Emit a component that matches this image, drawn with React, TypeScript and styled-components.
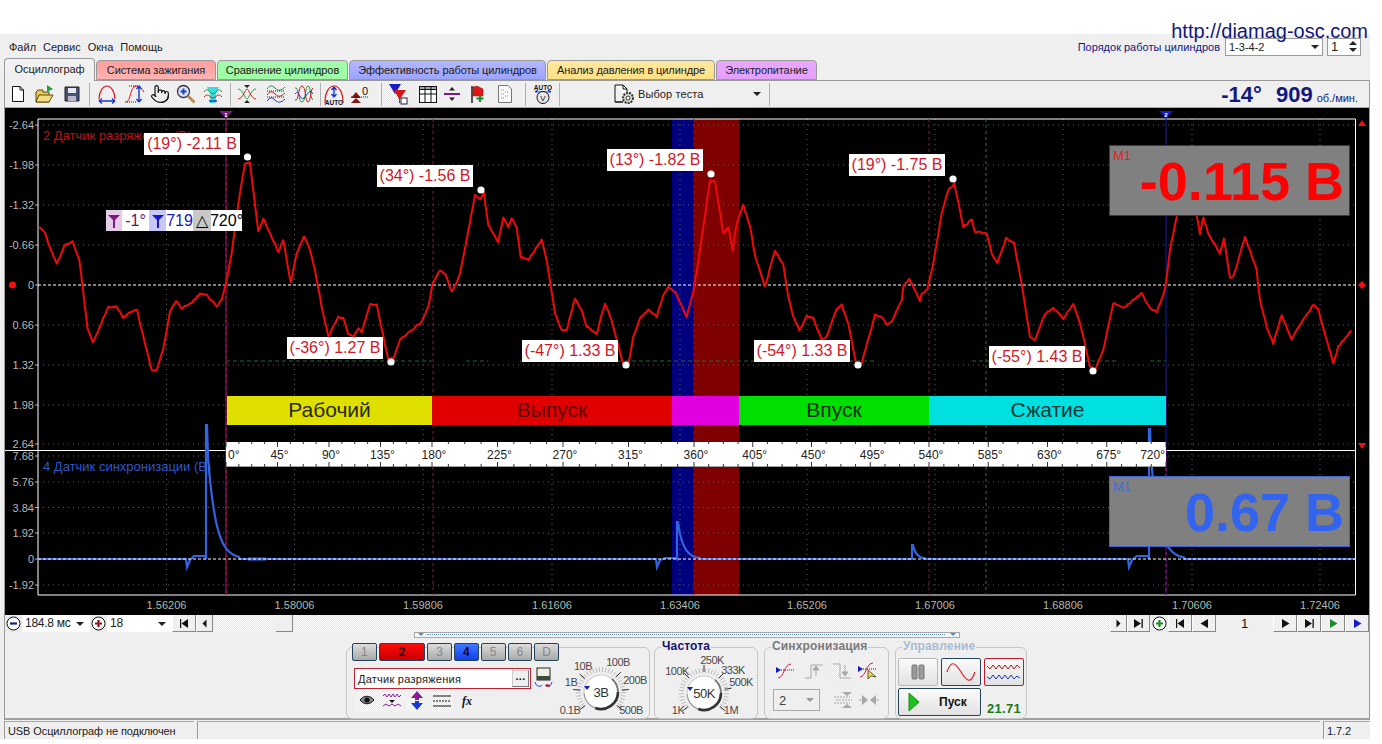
import React from "react";
import styled, { createGlobalStyle } from "styled-components";
import { Pointer } from "lucide-react";

const GlobalStyle = createGlobalStyle`
  html, body { margin: 0; padding: 0; background: #fff; }
  * { box-sizing: border-box; }
  body { font-family: "Liberation Sans", Arial, sans-serif; font-size: 11px; color: #111; overflow: hidden; }
`;

const Page = styled.div`
  position: relative;
  width: 1382px;
  height: 744px;
  padding-top: 34px;
`;
const SiteUrl = styled.div`
  position: absolute;
  top: 20px;
  right: 14px;
  font-size: 20px;
  color: #12187e;
  z-index: 3;
`;
const AppWindow = styled.div`
  width: 1370px;
  height: 705px;
  background: #efefef;
  display: flex;
  flex-direction: column;
`;
const MenuRow = styled.div`
  height: 26px;
  display: flex;
  justify-content: space-between;
  padding: 4px 9px 0 9px;
`;
const Menu = styled.div`
  display: flex;
  gap: 7px;
  padding-top: 3px;
  height: 17px;
  color: #222;
`;
const OrderBox = styled.div`
  display: flex;
  align-items: center;
  height: 17px;
  color: #12187e;
`;
const OrderSelect = styled.div`
  width: 98px;
  height: 18px;
  margin-left: 5px;
  background: #fff;
  border: 1px solid #9a9a9a;
  color: #222;
  padding: 0 3px;
  display: flex;
  justify-content: space-between;
  align-items: center;
`;
const Spinner = styled(OrderSelect)`
  width: 34px;
  margin-left: 4px;
  font-size: 13px;
`;
const SpinArrows = styled.div`
  display: flex;
  flex-direction: column;
  gap: 3px;
`;
const Tri = styled.span<{ $dir: "up" | "down"; $c?: string }>`
  display: block;
  flex: none;
  width: 0;
  height: 0;
  border-left: 4px solid transparent;
  border-right: 4px solid transparent;
  ${(p) => (p.$dir === "up" ? "border-bottom" : "border-top")}: 4px solid ${(p) => p.$c || "#222"};
`;
const TabsRow = styled.div`
  height: 20px;
  display: flex;
  gap: 1px;
  padding-left: 4px;
  align-items: flex-end;
`;
const Tab = styled.div<{ $w: number; $c1: string; $c2: string; $active?: boolean }>`
  position: relative;
  width: ${(p) => p.$w}px;
  height: ${(p) => (p.$active ? 23 : 20)}px;
  margin-bottom: ${(p) => (p.$active ? -1 : 0)}px;
  z-index: ${(p) => (p.$active ? 2 : 0)};
  border: 1px solid #9a9a9a;
  border-bottom: ${(p) => (p.$active ? "none" : "1px solid #9a9a9a")};
  border-radius: 4px 4px 0 0;
  background: linear-gradient(${(p) => p.$c1}, ${(p) => p.$c2});
  display: flex;
  align-items: center;
  justify-content: center;
  padding-bottom: ${(p) => (p.$active ? 3 : 0)}px;
  color: #1c1c1c;
  letter-spacing: -0.1px;
`;
const Workspace = styled.div`
  margin-left: 4px;
  width: 1366px;
  height: 640px;
  border: 1px solid #9a9a9a;
  border-bottom: none;
  display: flex;
  flex-direction: column;
`;
const Toolbar = styled.div`
  height: 27px;
  display: flex;
  align-items: center;
  border-bottom: 1px solid #a8a8a8;
`;
const ToolBtn = styled.div<{ $w: number; $ml?: number; $pressed?: boolean }>`
  width: ${(p) => p.$w}px;
  height: 25px;
  margin-left: ${(p) => p.$ml || 0}px;
  flex: none;
  display: flex;
  align-items: center;
  justify-content: center;
  background: ${(p) =>
    p.$pressed ? "repeating-conic-gradient(#e4e4e4 0 25%, #fbfbfb 0 50%) 0 0/2px 2px" : "transparent"};
`;
const ToolSep = styled.div<{ $ml?: number }>`
  width: 1px;
  height: 23px;
  flex: none;
  margin-left: ${(p) => p.$ml || 0}px;
  background: #b0b0b0;
`;
const TestPicker = styled.div`
  width: 155px;
  flex: none;
  margin-left: 54px;
  display: flex;
  align-items: center;
  gap: 3px;
  color: #222;
  letter-spacing: 0.1px;
`;
const TestArrow = styled.div`
  margin-left: auto;
  margin-right: 8px;
`;
const Rpm = styled.div`
  margin-left: auto;
  margin-right: 11px;
  padding-top: 1px;
  display: flex;
  align-items: baseline;
  color: #12187e;
  font-weight: 700;
  font-size: 22px;
`;
const RpmValue = styled.span`
  margin-left: 14px;
`;
const RpmUnit = styled.span`
  margin-left: 4px;
  font-weight: 400;
  font-size: 11px;
`;

const Scope = styled.div`
  position: relative;
  height: 507px;
  background: #000;
  overflow: hidden;
`;
const ScopeSvg = styled.svg`
  display: block;
  font-family: "Liberation Sans", Arial, sans-serif;
`;
const Callout = styled.div<{ $x: number; $y: number }>`
  position: absolute;
  left: ${(p) => p.$x - 5}px;
  top: ${(p) => p.$y - 108}px;
  width: 96px;
  height: 22px;
  background: #fff;
  color: #d01828;
  font-size: 16px;
  line-height: 22px;
  text-align: center;
  white-space: nowrap;
`;
const Readout = styled.div`
  position: absolute;
  left: 101px;
  top: 102px;
  height: 21px;
  display: flex;
  font-size: 16px;
  line-height: 21px;
`;
const ReadCell = styled.div<{ $w: number; $bg: string; $c?: string }>`
  width: ${(p) => p.$w}px;
  background: ${(p) => p.$bg};
  color: ${(p) => p.$c || "#000"};
  display: flex;
  align-items: center;
  justify-content: center;
  white-space: nowrap;
  overflow: hidden;
`;
const Meter = styled.div<{ $y: number; $c: string; $border: string }>`
  position: absolute;
  left: 1104px;
  top: ${(p) => p.$y - 108}px;
  width: 241px;
  height: 71px;
  background: #808080;
  border: 1.5px solid ${(p) => p.$border};
  color: ${(p) => p.$c};
  text-align: right;
  padding-right: 5px;
  font-size: 54px;
  font-weight: 700;
  line-height: 70px;
`;
const MeterTag = styled.span`
  position: absolute;
  left: 3px;
  top: 2px;
  font-size: 13px;
  line-height: 15px;
  font-weight: 400;
  opacity: 0.75;
`;

const ScrollRow = styled.div`
  height: 17px;
  display: flex;
  align-items: stretch;
  background: #fff;
`;
const RoundBtn = styled.div<{ $w?: number }>`
  width: ${(p) => p.$w || 17}px;
  flex: none;
  background: #ececec;
  display: flex;
  align-items: center;
  justify-content: center;
`;
const ComboText = styled.div<{ $w: number }>`
  width: ${(p) => p.$w}px;
  flex: none;
  font-size: 12px;
  line-height: 17px;
  padding-left: 3px;
  padding-right: 6px;
  color: #222;
  display: flex;
  align-items: center;
  justify-content: space-between;
  letter-spacing: -0.25px;
`;
const NavBtn = styled.div<{ $w: number; $ml?: number }>`
  width: ${(p) => p.$w}px;
  margin-left: ${(p) => p.$ml || 0}px;
  flex: none;
  background: #efefef;
  border-right: 1px solid #888;
  border-bottom: 1px solid #888;
  border-left: 1px solid #fff;
  display: flex;
  align-items: center;
  justify-content: center;
`;
const Track = styled.div`
  flex: 1;
  position: relative;
  background: repeating-conic-gradient(#e6e6e6 0 25%, #fff 0 50%) 0 0/2px 2px;
`;
const Thumb = styled.div`
  position: absolute;
  left: 63px;
  top: 0;
  width: 17px;
  height: 17px;
  background: #efefef;
  border-right: 1px solid #888;
  border-bottom: 1px solid #888;
`;
const PageNo = styled.div`
  width: 57px;
  flex: none;
  background: #efefef;
  text-align: center;
  font-size: 13px;
  line-height: 17px;
`;

const Panel = styled.div`
  height: 88px;
  border-bottom: 2px solid #a0a0a0;
  display: flex;
  flex-direction: column;
`;
const Expander = styled.div`
  margin-left: 409px;
  width: 546px;
  height: 6px;
  flex: none;
  border: 1px solid #a8a8a8;
  position: relative;
  background: #f6f6f6;
`;
const ExpanderDots = styled.div`
  position: absolute;
  left: 12px;
  right: 14px;
  top: 1px;
  border-top: 1px dotted #5b8fd8;
`;
const ExpanderMark = styled.div<{ $right?: boolean }>`
  position: absolute;
  top: 0;
  ${(p) => (p.$right ? "right: 3px" : "left: 3px")};
  width: 0;
  height: 0;
  border-left: 3px solid transparent;
  border-right: 3px solid transparent;
  border-top: 3px solid #3f8fe0;
`;
const GroupsRow = styled.div`
  margin: 9px 0 0 341px;
  display: flex;
`;
const Group = styled.div<{ $w: number; $ml: number }>`
  position: relative;
  width: ${(p) => p.$w}px;
  margin-left: ${(p) => p.$ml}px;
  height: 72px;
  border: 1px solid #c6c6c6;
  border-radius: 6px;
  flex: none;
`;
const Legend = styled.div<{ $c: string }>`
  position: absolute;
  top: -9px;
  left: 6px;
  padding: 0 1px;
  background: #efefef;
  color: ${(p) => p.$c};
  font-size: 12px;
  line-height: 15px;
  font-weight: 700;
  letter-spacing: 0.15px;
`;
const SourceGroup = styled(Group)`
  display: flex;
`;
const SourceCol = styled.div`
  width: 207px;
  flex: none;
  margin: -5px 0 0 5px;
`;
const ChannelRow = styled.div`
  height: 18px;
  display: flex;
  gap: 2px;
`;
const Channel = styled.div<{ $w?: number; $on?: "red" | "blue" }>`
  width: ${(p) => p.$w || 25}px;
  border: 1px solid #23435a;
  border-radius: 2px;
  background: ${(p) =>
    p.$on === "red"
      ? "linear-gradient(#ff0a0a, #c80000)"
      : p.$on === "blue"
        ? "linear-gradient(#3f78ff, #1040ee)"
        : "linear-gradient(#dcdcdc, #a9a9a9)"};
  color: ${(p) => (p.$on ? "#200408" : "#868686")};
  font-size: 12px;
  font-weight: ${(p) => (p.$on ? 700 : 400)};
  display: flex;
  align-items: center;
  justify-content: center;
`;
const FieldRow = styled.div`
  margin: 7px 0 0 2px;
  height: 21px;
  display: flex;
  align-items: center;
`;
const SensorField = styled.div`
  width: 177px;
  height: 21px;
  background: #fff;
  border: 1px solid #c02030;
  display: flex;
  align-items: center;
  justify-content: space-between;
  padding: 1px 1px 1px 3px;
  letter-spacing: 0.25px;
  color: #222;
`;
const DotsBtn = styled.div`
  width: 17px;
  height: 17px;
  background: #efefef;
  border-right: 1px solid #777;
  border-bottom: 1px solid #777;
  border-left: 1px solid #ccc;
  border-top: 1px solid #ccc;
  text-align: center;
  font-weight: 700;
  line-height: 11px;
`;
const SmallIcons = styled.div`
  margin-left: 3px;
  height: 23px;
  display: flex;
  gap: 1px;
`;
const SmallBtn = styled.div<{ $plain?: boolean }>`
  width: 24px;
  height: 23px;
  display: flex;
  align-items: center;
  justify-content: center;
  background: ${(p) => (p.$plain ? "transparent" : "repeating-conic-gradient(#e8e8e8 0 25%, #fff 0 50%) 0 0/2px 2px")};
`;
const KnobSvg = styled.svg`
  display: block;
  flex: none;
  font-family: "Liberation Sans", Arial, sans-serif;
`;
const SyncGrid = styled.div`
  padding: 12px 0 0 8px;
  display: flex;
  flex-direction: column;
  gap: 7px;
`;
const SyncRow = styled.div`
  display: flex;
  align-items: center;
  height: 22px;
`;
const SyncSlot = styled.div<{ $w: number; $ml?: number; $pressed?: boolean }>`
  width: ${(p) => p.$w}px;
  height: 22px;
  flex: none;
  margin-left: ${(p) => p.$ml || 0}px;
  display: flex;
  align-items: center;
  justify-content: center;
  background: ${(p) => (p.$pressed ? "repeating-conic-gradient(#e4e4e4 0 25%, #fbfbfb 0 50%) 0 0/2px 2px" : "none")};
`;
const SyncSelect = styled.div`
  width: 47px;
  height: 22px;
  border: 1px solid #aaa;
  display: flex;
  align-items: center;
  justify-content: space-between;
  padding: 0 5px 0 5px;
  font-size: 13px;
  color: #444;
`;
const ControlGrid = styled.div`
  padding: 10px 0 0 2px;
  display: grid;
  grid-template-columns: 40px 40px 40px;
  grid-template-rows: 28px 28px;
  column-gap: 3px;
  row-gap: 2px;
`;
const CtlBtn = styled.div<{ $border: string }>`
  border: 1px solid ${(p) => p.$border};
  border-radius: 2px;
  background: linear-gradient(#fafafa, #e2e2e2);
  display: flex;
  align-items: center;
  justify-content: center;
`;
const StartBtn = styled(CtlBtn)`
  grid-column: 1 / span 2;
  justify-content: flex-start;
  gap: 19px;
  padding-left: 9px;
  font-size: 12px;
  font-weight: 700;
  color: #111;
`;
const Counter = styled.div`
  color: #1a7a1a;
  font-size: 13px;
  font-weight: 700;
  text-align: center;
  padding-top: 13px;
  letter-spacing: 0.3px;
`;
const StatusBar = styled.div`
  height: 19px;
  display: flex;
  padding-top: 1px;
`;
const StatusCell = styled.div<{ $w?: number; $ml?: number; $grow?: boolean }>`
  width: ${(p) => (p.$w ? `${p.$w}px` : "auto")};
  flex: ${(p) => (p.$grow ? 1 : "none")};
  margin-left: ${(p) => p.$ml || 0}px;
  border-left: 1px solid #9a9a9a;
  border-top: 1px solid #a8a8a8;
  padding: 3px 0 0 3px;
  color: #222;
  white-space: nowrap;
  letter-spacing: -0.1px;
`;

/* trace data, taken from the picture in 3x crop coordinates */
const crop = (ox: number, a: number[]) => {
  const out: [number, number][] = [];
  for (let i = 0; i < a.length; i += 2) out.push([ox + a[i] / 3, 110 + a[i + 1] / 3]);
  return out;
};
const rawTrace = [
  ...crop(0, [118,350,135,368,145,400,170,462,195,405,218,395,238,450,248,530,262,650,278,698,292,670,310,625,325,592,350,590,370,622,400,600,412,602,425,660,455,780,470,780,490,715,510,605,528,573,545,595,575,578,600,552,620,555,650,588,665,570,680,510,695,430,715,280,735,160,750,160,775,365,790,325,815,380,835,425,850,390,872,518,890,430,912,378,930,420,945,480,965,590,985,680,1015,620,1030,625,1045,670,1060,680,1075,655,1085,665,1110,585,1130,585,1165,750,1180,745,1200,690,1230,665,1265,635,1285,590,1298,520,1320,482,1335,490,1355,545,1370,520]),
  ...crop(460, [0,490,20,390,45,255,60,270,72,250,85,345,100,370,115,395,130,320,145,350,155,325,170,350,182,440,205,450,245,390,260,450,285,610,305,660,320,660,345,565,365,600,380,650,410,670,435,580,455,630,470,690,490,760,505,765,520,680,540,625,565,600,590,620,610,555,625,530,645,545,680,620,700,545,720,420,750,210,765,215,790,370,805,350,818,420,830,340,850,285,870,350,885,435,915,530,945,422,970,465,985,560,1000,620,1018,660,1040,620,1060,625,1085,690,1100,680,1130,595,1145,585,1165,640,1190,770,1205,760,1245,615,1265,620,1280,645,1295,635,1325,570,1330,530,1348,505,1380,575]),
  ...crop(920, [5,550,22,540,40,460,65,310,85,240,103,222,130,350,155,330,165,365,200,370,215,430,232,460,258,385,282,400,305,520,330,680,345,690,375,610,400,595,430,625,460,580,480,640,510,770,525,780,550,720,580,578,610,595,665,550,690,595,710,605,730,555,738,520,750,420,770,320,800,150,830,315,840,370,850,320,865,370,900,430,912,385,930,505,940,500,975,380,1010,480,1020,570,1040,650,1060,700,1085,615,1115,690,1130,660,1180,585,1195,600,1240,760,1255,710,1295,660,1300,680]),
];
const jagged = (pts: [number, number][]) => {
  let s = 7;
  const rnd = () => {
    s = (s * 16807) % 2147483647;
    return (s % 1000) / 1000 - 0.5;
  };
  const out: string[] = [];
  for (let i = 0; i < pts.length - 1; i++) {
    const [x0, y0] = pts[i];
    const [x1, y1] = pts[i + 1];
    const n = Math.max(1, Math.round((x1 - x0) / 1.5));
    for (let k = 0; k < n; k++) {
      const t = k / n;
      out.push(`${(x0 + (x1 - x0) * t).toFixed(1)},${(y0 + (y1 - y0) * t + rnd() * 1.6).toFixed(1)}`);
    }
  }
  return out.join(" ");
};
const redTrace = jagged(rawTrace);

const Z2 = 559;
const pulse = (x0: number, top: number, amp: number, tau: number, len: number) => {
  const p: string[] = [`${x0},${Z2}`, `${x0},${top}`, `${x0 + 1},${top}`];
  for (let x = 2; x < len; x++) {
    p.push(`${x0 + x},${(Z2 - amp * Math.exp(-(x - 2) / tau)).toFixed(1)}`);
  }
  p.push(`${x0 + len},${Z2}`);
  return p.join(" ");
};
const bluePath = [
  `38,${Z2}`, `186,${Z2}`, `187,567`, `190,560`, `194,556`, `205,556`,
  pulse(206, 425, 102, 8, 34),
  `656,${Z2}`, `657,567`, `660,560`, `665,558`, `676,558`,
  pulse(677, 522, 30, 6, 24),
  `911,${Z2}`,
  pulse(912, 545, 10, 4, 14),
  `1128,${Z2}`, `1129,567`, `1132,560`, `1137,556`, `1148,556`,
  pulse(1149, 429, 102, 8, 36),
  `1355,${Z2}`,
].join(" ");

const hGrid = [125, 165, 205, 245, 325, 365, 405, 444, 456, 482, 507.5, 533, 585];
const vGrid = [166.5, 294.5, 423, 552, 680, 807, 935, 1063, 1192, 1320];
const yLabels: [string, number][] = [
  ["-2.64", 125], ["-1.98", 165], ["-1.32", 205], ["-0.66", 245], ["0", 285], ["0.66", 325], ["1.32", 365], ["1.98", 405], ["2.64", 444],
  ["7.68", 456], ["5.76", 482], ["3.84", 507.5], ["1.92", 533], ["0", 559], ["-1.92", 585],
];
const xLabels = ["1.56206", "1.58006", "1.59806", "1.61606", "1.63406", "1.65206", "1.67006", "1.68806", "1.70606", "1.72406"];
const phases = [
  { x0: 227, x1: 432, bg: "#e0e000", c: "#2a2a00", t: "Рабочий" },
  { x0: 432, x1: 672, bg: "#e00000", c: "#5c0000", t: "Выпуск" },
  { x0: 672, x1: 739, bg: "#e000e0", c: "", t: "" },
  { x0: 739, x1: 929, bg: "#00e000", c: "#003000", t: "Впуск" },
  { x0: 929, x1: 1166, bg: "#00e0e0", c: "#003838", t: "Сжатие" },
];
// the ruler is not linear: each stroke has its own width
const sections = [
  { from: 0, x0: 226, step: 51.5 },
  { from: 180, x0: 432, step: 65.5 },
  { from: 360, x0: 694, step: 58.75 },
  { from: 540, x0: 929, step: 59.25 },
];
const rulerTicks: { deg: number; x: number }[] = [];
sections.forEach((s) => {
  for (let i = 0; i < 4; i++) rulerTicks.push({ deg: s.from + i * 45, x: s.x0 + i * s.step });
});
rulerTicks.push({ deg: 720, x: 1166 });
const markers = [
  [247.5, 157], [481, 190], [711, 174], [953, 179], [391, 362], [626, 365], [858, 365], [1093, 371],
];
const callouts = [
  { x: 144, y: 133, t: "(19°) -2.11 В" },
  { x: 377, y: 165, t: "(34°) -1.56 В" },
  { x: 607, y: 149, t: "(13°) -1.82 В" },
  { x: 849, y: 154, t: "(19°) -1.75 В" },
  { x: 287, y: 337, t: "(-36°) 1.27 В" },
  { x: 522, y: 340, t: "(-47°) 1.33 В" },
  { x: 754, y: 340, t: "(-54°) 1.33 В" },
  { x: 989, y: 346, t: "(-55°) 1.43 В" },
];

const ScopeChart = () => (
  <ScopeSvg width={1364} height={507} viewBox="5 108 1364 507">
    <rect x={672} y={119} width={22} height={476} fill="#00007f" />
    <rect x={694} y={119} width={45} height={476} fill="#7f0000" />
    {hGrid.map((y) => (
      <line key={y} x1={38} x2={1355} y1={y} y2={y} stroke="#5a5a5a" strokeDasharray="1 4" />
    ))}
    {vGrid.map((x) => (
      <line key={x} x1={x} x2={x} y1={119} y2={595} stroke="#5a5a5a" strokeDasharray="1 4" />
    ))}
    <path d="M38 119H1355.5V595H38Z" fill="none" stroke="#fff" />
    <line x1={5} x2={1356} y1={450.5} y2={450.5} stroke="#fff" />
    {yLabels.map(([t, y]) => (
      <g key={`${t}${y}`}>
        <text x={34} y={y + 4} textAnchor="end" fontSize={11} fill="#b8b8b8">{t}</text>
        <line x1={35} x2={38} y1={y} y2={y} stroke="#b8b8b8" />
      </g>
    ))}
    {xLabels.map((t, i) => (
      <text key={t} x={vGrid[i]} y={609} textAnchor="middle" fontSize={11} fill="#aebcae">{t}</text>
    ))}
    <text x={43} y={140} fontSize={13} fill="#c01018">2 Датчик разряжения (В)</text>
    <text x={43} y={471} fontSize={13} fill="#3058c8">4 Датчик синхронизации (В)</text>

    {[433, 694, 929].map((x) => (
      <line key={x} x1={x} x2={x} y1={119} y2={595} stroke="#96141c" strokeDasharray="3 3" />
    ))}
    <line x1={986} x2={986} y1={119} y2={595} stroke="#1c7a24" strokeDasharray="3 3" />
    {[[226, 432], [466, 488], [520, 877], [972, 1116], [1150, 1166]].map(([a, b]) => (
      <line key={a} x1={a} x2={b} y1={361} y2={361} stroke="#1f6c24" strokeDasharray="4 3" />
    ))}
    <line x1={226} x2={226} y1={116} y2={595} stroke="#7a1a86" />
    <line x1={226} x2={226} y1={116} y2={595} stroke="#c01030" strokeDasharray="3 3" />
    <line x1={1166} x2={1166} y1={116} y2={595} stroke="#1818b8" />
    <line x1={1166} x2={1166} y1={450} y2={595} stroke="#c01030" strokeDasharray="3 3" />

    <line x1={38} x2={1355} y1={285} y2={285} stroke="#fff" strokeDasharray="3 2" />
    <polyline points={redTrace} fill="none" stroke="#ee0a0a" strokeWidth={2} strokeLinejoin="round" />
    <polyline points={bluePath} fill="none" stroke="#3264e0" strokeWidth={2.2} />
    <rect x={248} y={557.5} width={18} height={3} fill="#3264e0" />
    <line x1={38} x2={1355} y1={Z2} y2={Z2} stroke="#fff" strokeDasharray="3 2" />

    {markers.map(([x, y]) => (
      <circle key={x} cx={x} cy={y} r={3.6} fill="#fff" />
    ))}
    {phases.map((p) => (
      <g key={p.x0}>
        <rect x={p.x0} y={396} width={p.x1 - p.x0} height={29} fill={p.bg} />
        {p.t && <text x={(p.x0 + p.x1) / 2} y={417} textAnchor="middle" fontSize={21} fill={p.c}>{p.t}</text>}
      </g>
    ))}
    <rect x={226} y={442} width={940} height={25} fill="#fff" />
    <line x1={226} x2={1166} y1={466.5} y2={466.5} stroke="#a0a0a0" />
    {rulerTicks.map((t, i) => {
      const next = rulerTicks[i + 1];
      const step = next ? (next.x - t.x) / 4 : 0;
      return (
        <g key={t.deg} stroke="#333">
          <line x1={t.x} x2={t.x} y1={442} y2={447} />
          <line x1={t.x} x2={t.x} y1={462} y2={467} />
          {next && [1, 2, 3].map((k) => (
            <g key={k}>
              <line x1={t.x + k * step} x2={t.x + k * step} y1={442} y2={444} />
              <line x1={t.x + k * step} x2={t.x + k * step} y1={464} y2={467} />
            </g>
          ))}
          <text
            x={t.deg === 0 ? 228 : t.deg === 720 ? 1165 : t.x + 2}
            y={459}
            textAnchor={t.deg === 0 ? "start" : t.deg === 720 ? "end" : "middle"}
            fontSize={12}
            fill="#222"
            stroke="none"
          >
            {t.deg}°
          </text>
        </g>
      );
    })}

    <path d="M219 111H233L226 118Z" fill="#7a1a86" />
    <text x={226} y={117} textAnchor="middle" fontSize={6} fontWeight={700} fill="#fff">1</text>
    <path d="M1159 111H1173L1166 118Z" fill="#1a1ad0" />
    <text x={1166} y={117} textAnchor="middle" fontSize={6} fontWeight={700} fill="#fff">2</text>
    <path d="M1358 126H1366L1362 120Z" fill="#f01010" />
    <path d="M1362 281L1366 285L1362 289L1358 285Z" fill="#f01010" />
    <path d="M1358 443H1366L1362 449Z" fill="#f01010" />
    <circle cx={12.5} cy={285} r={3.5} fill="#f01010" />
  </ScopeSvg>
);

const Icon = ({ w = 20, h = 20, children }: { w?: number; h?: number; children: React.ReactNode }) => (
  <svg width={w} height={h} viewBox={`0 0 ${w} ${h}`} fill="none" style={{ display: "block" }}>
    {children}
  </svg>
);

const Dots = ({ y, x0 = 1, x1 = 19 }: { y: number; x0?: number; x1?: number }) => (
  <line x1={x0} x2={x1} y1={y} y2={y} stroke="#222" strokeDasharray="1 1" />
);

const toolIcons = {
  newFile: (
    <Icon w={14} h={18}><path d="M1.5 1.5H9L12.5 5V16.5H1.5Z" fill="#fff" stroke="#111" /><path d="M9 1.5V5H12.5" stroke="#111" /></Icon>
  ),
  open: (
    <Icon w={19} h={20}>
      <path d="M1 18V8L3 6H8V8H14V18Z" fill="#e8c858" stroke="#5a4a10" />
      <path d="M1 18L4 11H18L14 18Z" fill="#f4dc80" stroke="#5a4a10" />
      <path d="M12 1L18 5L12 8Z" fill="#20a040" />
    </Icon>
  ),
  save: (
    <Icon w={16} h={16}>
      <path d="M1 1H15V15H1Z" fill="#46507a" stroke="#222" />
      <rect x={4} y={2} width={8} height={5} fill="#e8e8f0" />
      <rect x={4} y={10} width={8} height={5} fill="#b8b8c8" />
    </Icon>
  ),
  arch: (
    <Icon>
      <path d="M2 15C2 8 6 2 10 2S18 8 18 15" stroke="#d81818" strokeWidth={1.2} />
      <path d="M2 17H18M2 17L5 14.5M2 17L5 19.5M18 17L15 14.5M18 17L15 19.5" stroke="#1838d0" strokeWidth={1.4} />
    </Icon>
  ),
  stretch: (
    <Icon>
      <Dots y={2} x0={4} x1={16} /><Dots y={18} x0={0} x1={12} />
      <path d="M1 18C6 18 5 2 11 2C15 2 17 5 19 8" stroke="#d81818" />
      <path d="M14 2V18M14 2L11.5 5M14 2L16.5 5M14 18L11.5 15M14 18L16.5 15" stroke="#1838d0" strokeWidth={1.4} />
    </Icon>
  ),
  zoom: (
    <Icon>
      <circle cx={7.5} cy={7.5} r={6} fill="#dbe6f6" stroke="#334" strokeWidth={1.3} />
      <path d="M7.5 4.5V10.5M4.5 7.5H10.5" stroke="#2040c0" strokeWidth={2} />
      <path d="M12 12L18.5 18.5" stroke="#b88a48" strokeWidth={2.6} />
    </Icon>
  ),
  cyan: (
    <Icon>
      <path d="M4 3H16L13 10V19H7V10Z" fill="#38dcdc" />
      <path d="M1 8C5 2 7 10 10 10S15 2 19 8" stroke="#1c9c3c" />
      <path d="M1 13C5 8 7 14 10 14S15 8 19 13" stroke="#d02020" />
      <path d="M6 17H14" stroke="#1838d0" strokeWidth={1.4} />
    </Icon>
  ),
  cross: (
    <Icon>
      <path d="M1 5C6 5 8 15 10 15S14 5 19 5" stroke="#1c9c3c" />
      <path d="M1 15C6 15 8 5 10 5S14 15 19 15" stroke="#d02020" />
      <path d="M7 1H13L10 4ZM7 19H13L10 16Z" fill="#222" />
    </Icon>
  ),
  waves: (
    <Icon w={20} h={20}>
      <path d="M1 5C4 1 6 1 9 4S15 7 19 3" stroke="#1c9c3c" /><Dots y={7} />
      <path d="M1 11C4 7 6 7 9 10S15 13 19 9" stroke="#d02020" /><Dots y={13} />
      <path d="M1 17C4 13 6 13 9 16S15 19 19 15" stroke="#1838d0" />
    </Icon>
  ),
  overlap: (
    <Icon>
      <path d="M1 4C5 2 4 18 8 18S11 2 14 2 16 14 19 16" stroke="#1c9c3c" />
      <path d="M1 16C5 18 4 2 8 2S11 18 14 18 16 6 19 4" stroke="#d02020" />
      <path d="M1 10C5 4 6 18 10 14S16 4 19 10" stroke="#1838d0" />
    </Icon>
  ),
  auto: (
    <Icon w={20} h={21}>
      <path d="M1 19C1 8 5 2 10 2S19 8 19 19" stroke="#d81818" strokeWidth={1.2} />
      <path d="M10 3V13M10 3L7.5 6M10 3L12.5 6M10 13L7.5 10M10 13L12.5 10" stroke="#1838d0" strokeWidth={1.4} />
      <text x={10} y={20.5} textAnchor="middle" fontSize={6.5} fontWeight={700} fill="#111">AUTO</text>
    </Icon>
  ),
  zero: (
    <Icon w={20} h={20}>
      <path d="M1 14H11L6 8ZM1 19H11L6 14Z" fill="#801818" />
      <Dots y={13} x0={1} x1={19} />
      <text x={15} y={11} textAnchor="middle" fontSize={11} fill="#111">0</text>
    </Icon>
  ),
  filter: (
    <Icon w={20} h={22}>
      <path d="M1 1H13L7 11Z" fill="#1818c8" />
      <path d="M6 7H18L12 16V20H11V16Z" fill="#d01818" />
      <rect x={13} y={15} width={6} height={6} fill="#fff" stroke="#224" />
    </Icon>
  ),
  table: (
    <Icon w={18} h={17}>
      <rect x={0.5} y={0.5} width={17} height={16} fill="#fff" stroke="#111" />
      <rect x={0.5} y={0.5} width={17} height={3} fill="#9aa" stroke="#111" />
      <path d="M6 1V16M12 1V16M1 8H17" stroke="#111" />
    </Icon>
  ),
  divide: (
    <Icon w={16} h={16}>
      <path d="M5 4.5L8 1L11 4.5Z" fill="#222" /><path d="M5 11.5L8 15L11 11.5Z" fill="#222" />
      <path d="M0 8H16" stroke="#7a1a86" strokeWidth={2} />
    </Icon>
  ),
  flag: (
    <Icon w={14} h={19}>
      <path d="M2 1V18" stroke="#111" strokeWidth={1.4} />
      <path d="M3 2L7 1L13 4V11H3Z" fill="#e01818" stroke="#801010" strokeWidth={0.5} />
      <path d="M10 10V17M6.5 13.5H13.5" stroke="#1a8a28" strokeWidth={2.2} />
    </Icon>
  ),
  note: (
    <Icon w={14} h={18}>
      <path d="M0.5 0.5H10L13.5 4V17.5H0.5Z" fill="#fafafa" stroke="#777" />
      <path d="M3 5H6M3 9H6M3 13H6M7 7H10M7 11H10" stroke="#888" strokeDasharray="1 1" />
    </Icon>
  ),
  autoV: (
    <Icon w={18} h={20}>
      <text x={9} y={5.5} textAnchor="middle" fontSize={6.5} fontWeight={700} fill="#111">AUTO</text>
      <path d="M1 8H17M1 8L4 6M17 8L14 6" stroke="#1838d0" strokeWidth={1.2} />
      <circle cx={9} cy={13.5} r={6} fill="#e8e8e8" stroke="#111" />
      <text x={9} y={16.5} textAnchor="middle" fontSize={8} fill="#114">V</text>
    </Icon>
  ),
  test: (
    <Icon w={21} h={21}>
      <path d="M1 1H9L13 5V11M9 18H1Z" fill="#fff" stroke="#111" />
      <path d="M1 1V18M9 1V5H13" stroke="#111" />
      <circle cx={14} cy={14} r={5} fill="#d8e0d4" stroke="#333" strokeDasharray="2 1" strokeWidth={2} />
      <circle cx={14} cy={14} r={2} fill="#fff" stroke="#333" />
    </Icon>
  ),
};

const SeekIcon = ({ kind, c = "#111" }: { kind: "first" | "prev" | "next" | "last" | "small-prev" | "small-next"; c?: string }) => (
  <Icon w={11} h={9}>
    {kind === "first" && <path d="M1 0V9H2.2V0ZM2.5 4.5L9 0V9Z" fill={c} />}
    {kind === "prev" && <path d="M1.5 4.5L9 0V9Z" fill={c} />}
    {kind === "next" && <path d="M2 0L9.5 4.5L2 9Z" fill={c} />}
    {kind === "last" && <path d="M1 0L8 4.5L1 9ZM8.5 0V9H9.8V0Z" fill={c} />}
    {kind === "small-prev" && <path d="M3.5 4.5L7.5 0.5V8.5Z" fill={c} />}
    {kind === "small-next" && <path d="M3.5 0.5L7.5 4.5L3.5 8.5Z" fill={c} />}
  </Icon>
);
const ZoomRound = ({ sign, c }: { sign: "+" | "-"; c: string }) => (
  <Icon w={15} h={15}>
    <circle cx={7.5} cy={7.5} r={6.5} fill="#fff" stroke="#111" />
    <path d={sign === "+" ? "M7.5 4V11M4 7.5H11" : "M4 7.5H11"} stroke={c} strokeWidth={2.2} />
  </Icon>
);

type KnobProps = { w: number; h: number; cx: number; cy: number; value: string; labels: [string, number, number][]; longAngles: number[] };

const polar = (cx: number, cy: number, r: number, deg: number): [number, number] => {
  const a = ((deg - 90) * Math.PI) / 180;
  return [cx + r * Math.cos(a), cy + r * Math.sin(a)];
};
const arc = (cx: number, cy: number, r: number, a0: number, a1: number) => {
  const [x0, y0] = polar(cx, cy, r, a0);
  const [x1, y1] = polar(cx, cy, r, a1);
  return `M${x0} ${y0}A${r} ${r} 0 ${a1 - a0 > 180 ? 1 : 0} 1 ${x1} ${y1}`;
};
const Knob = ({ w, h, cx, cy, value, labels, longAngles }: KnobProps) => {
  const fine: number[] = [];
  for (let a = -132; a <= 132; a += 8) fine.push(a);
  return (
    <KnobSvg width={w} height={h} viewBox={`0 0 ${w} ${h}`}>
      {fine.map((a) => {
        const [x0, y0] = polar(cx, cy, 20, a);
        const [x1, y1] = polar(cx, cy, 25, a);
        return <line key={a} x1={x0} y1={y0} x2={x1} y2={y1} stroke="#bbb" />;
      })}
      {longAngles.map((a) => {
        const [x0, y0] = polar(cx, cy, 21, a);
        const [x1, y1] = polar(cx, cy, 28, a);
        return <line key={a} x1={x0} y1={y0} x2={x1} y2={y1} stroke="#333" />;
      })}
      <circle cx={cx} cy={cy} r={17} fill="#fff" stroke="#ccc" strokeWidth={1.2} />
      <path d={arc(cx, cy, 17, 40, 115)} stroke="#777" strokeWidth={1.8} fill="none" />
      <path d={arc(cx, cy, 17, 90, 200)} stroke="#333" strokeWidth={2.6} fill="none" />
      <path d={arc(cx, cy, 17, 200, 265)} stroke="#999" strokeWidth={1.2} fill="none" />
      <path d={`M${cx - 14} ${cy - 2}l-3 -4 h6z`} fill="#1818c8" />
      <text x={cx} y={cy + 5} textAnchor="middle" fontSize={13} letterSpacing={-0.5} fill="#333">{value}</text>
      {labels.map(([t, x, y]) => (
        <text key={t} x={x} y={y + 4} textAnchor="middle" fontSize={11} letterSpacing={-0.5} fill="#4a4a4a">{t}</text>
      ))}
    </KnobSvg>
  );
};

export default function App() {
  return (
    <Page>
      <GlobalStyle />
      <SiteUrl>http://diamag-osc.com</SiteUrl>
      <AppWindow>
        <MenuRow>
          <Menu>
            <span>Файл</span>
            <span>Сервис</span>
            <span>Окна</span>
            <span>Помощь</span>
          </Menu>
          <OrderBox>
            Порядок работы цилиндров
            <OrderSelect>1-3-4-2<Tri $dir="down" /></OrderSelect>
            <Spinner>1<SpinArrows><Tri $dir="up" /><Tri $dir="down" /></SpinArrows></Spinner>
          </OrderBox>
        </MenuRow>
        <TabsRow>
          <Tab $w={91} $c1="#f2f2f2" $c2="#efefef" $active>Осциллограф</Tab>
          <Tab $w={120} $c1="#ff9c9c" $c2="#ffb4b4">Система зажигания</Tab>
          <Tab $w={131} $c1="#a4f8ac" $c2="#9cffa4">Сравнение цилиндров</Tab>
          <Tab $w={197} $c1="#b4b8ff" $c2="#9ca4ff">Эффективность работы цилиндров</Tab>
          <Tab $w={168} $c1="#ffe8a0" $c2="#ffe084">Анализ давления в цилиндре</Tab>
          <Tab $w={101} $c1="#e8a8ff" $c2="#e4a0ff">Электропитание</Tab>
        </TabsRow>
        <Workspace>
          <Toolbar>
            <ToolBtn $w={26}>{toolIcons.newFile}</ToolBtn>
            <ToolBtn $w={27}>{toolIcons.open}</ToolBtn>
            <ToolBtn $w={28}>{toolIcons.save}</ToolBtn>
            <ToolSep $ml={3} />
            <ToolBtn $w={33} $ml={0}>{toolIcons.arch}</ToolBtn>
            <ToolBtn $w={24}>{toolIcons.stretch}</ToolBtn>
            <ToolBtn $w={25} $pressed><Pointer size={20} strokeWidth={1.4} color="#111" /></ToolBtn>
            <ToolBtn $w={27}>{toolIcons.zoom}</ToolBtn>
            <ToolBtn $w={28}>{toolIcons.cyan}</ToolBtn>
            <ToolSep $ml={3} />
            <ToolBtn $w={32}>{toolIcons.cross}</ToolBtn>
            <ToolBtn $w={26} $pressed>{toolIcons.waves}</ToolBtn>
            <ToolBtn $w={29}>{toolIcons.overlap}</ToolBtn>
            <ToolSep $ml={2} />
            <ToolBtn $w={26}>{toolIcons.auto}</ToolBtn>
            <ToolBtn $w={26}>{toolIcons.zero}</ToolBtn>
            <ToolSep $ml={8} />
            <ToolBtn $w={26} $ml={3} $pressed>{toolIcons.filter}</ToolBtn>
            <ToolBtn $w={28} $ml={3}>{toolIcons.table}</ToolBtn>
            <ToolBtn $w={20}>{toolIcons.divide}</ToolBtn>
            <ToolBtn $w={30}>{toolIcons.flag}</ToolBtn>
            <ToolBtn $w={26}>{toolIcons.note}</ToolBtn>
            <ToolSep $ml={7} />
            <ToolBtn $w={33}>{toolIcons.autoV}</ToolBtn>
            <ToolSep />
            <TestPicker>
              {toolIcons.test}
              <span>Выбор теста</span>
              <TestArrow><Tri $dir="down" /></TestArrow>
            </TestPicker>
            <ToolSep />
            <Rpm>
              -14°
              <RpmValue>909</RpmValue>
              <RpmUnit>об./мин.</RpmUnit>
            </Rpm>
          </Toolbar>

          <Scope>
            <ScopeChart />
            {callouts.map((c) => (
              <Callout key={c.t} $x={c.x} $y={c.y}>{c.t}</Callout>
            ))}
            <Readout>
              <ReadCell $w={16} $bg="#e6cce6">
                <Icon w={12} h={14}><path d="M0 1H12L7 6V14H5V6Z" fill="#7a1a86" /></Icon>
              </ReadCell>
              <ReadCell $w={27} $bg="#fff" $c="#5a1a66">-1°</ReadCell>
              <ReadCell $w={17} $bg="#c8c8f8">
                <Icon w={12} h={14}><path d="M0 1H12L7 6V14H5V6Z" fill="#1818c8" /></Icon>
              </ReadCell>
              <ReadCell $w={27} $bg="#fff" $c="#1818c8">719</ReadCell>
              <ReadCell $w={18} $bg="#c8c8c8">△</ReadCell>
              <ReadCell $w={31} $bg="#fff">720°</ReadCell>
            </Readout>
            <Meter $y={145} $c="#ff0000" $border="#a01018">
              <MeterTag>M1</MeterTag>
              -0.115 В
            </Meter>
            <Meter $y={476} $c="#3264f0" $border="#3c64d8">
              <MeterTag>M1</MeterTag>
              0.67 В
            </Meter>
          </Scope>

          <ScrollRow>
            <RoundBtn><ZoomRound sign="-" c="#1a1a70" /></RoundBtn>
            <ComboText $w={68}>184.8 мс<Tri $dir="down" /></ComboText>
            <RoundBtn><ZoomRound sign="+" c="#901018" /></RoundBtn>
            <ComboText $w={65}>18<Tri $dir="down" /></ComboText>
            <NavBtn $w={24}><SeekIcon kind="first" /></NavBtn>
            <NavBtn $w={17}><SeekIcon kind="small-prev" /></NavBtn>
            <Track><Thumb /></Track>
            <NavBtn $w={17}><SeekIcon kind="small-next" /></NavBtn>
            <NavBtn $w={23}><SeekIcon kind="last" /></NavBtn>
            <RoundBtn $w={18}><ZoomRound sign="+" c="#1a8a28" /></RoundBtn>
            <NavBtn $w={24}><SeekIcon kind="first" /></NavBtn>
            <NavBtn $w={24}><SeekIcon kind="prev" /></NavBtn>
            <PageNo>1</PageNo>
            <NavBtn $w={24}><SeekIcon kind="next" /></NavBtn>
            <NavBtn $w={24}><SeekIcon kind="last" /></NavBtn>
            <NavBtn $w={24}><SeekIcon kind="next" c="#1a8a28" /></NavBtn>
            <NavBtn $w={24}><SeekIcon kind="next" c="#1818d8" /></NavBtn>
          </ScrollRow>

          <Panel>
            <Expander>
              <ExpanderMark />
              <ExpanderDots />
              <ExpanderMark $right />
            </Expander>
            <GroupsRow>
              <SourceGroup $w={304} $ml={0}>
                <SourceCol>
                  <ChannelRow>
                    <Channel>1</Channel>
                    <Channel $w={47} $on="red">2</Channel>
                    <Channel>3</Channel>
                    <Channel $on="blue">4</Channel>
                    <Channel>5</Channel>
                    <Channel>6</Channel>
                    <Channel>D</Channel>
                  </ChannelRow>
                  <FieldRow>
                    <SensorField>
                      Датчик разряжения
                      <DotsBtn>...</DotsBtn>
                    </SensorField>
                    <SmallIcons>
                      <Icon w={19} h={21}>
                        <rect x={3} y={1} width={13} height={12} fill="#eef0e4" stroke="#222" />
                        <rect x={3} y={9} width={13} height={4} fill="#3c4a3c" />
                        <path d="M1 15C2 20 7 20 8 18M18 15C17 20 12 20 11 18" stroke="#1838c8" />
                        <path d="M12 18L16 19" stroke="#d01818" strokeWidth={2} />
                      </Icon>
                    </SmallIcons>
                  </FieldRow>
                  <SmallIcons>
                    <SmallBtn>
                      <Icon w={16} h={12}>
                        <path d="M1 5C5 0 11 0 15 5C11 10 5 10 1 5Z" fill="#888" stroke="#111" />
                        <circle cx={8} cy={5} r={2.6} fill="#111" />
                      </Icon>
                    </SmallBtn>
                    <SmallBtn>
                      <Icon w={20} h={20}>
                        <path d="M1 5 l2 -2 2 3 2 -3 2 3 2 -3 2 3 2 -3 2 3 2 -2" stroke="#8a1a9a" />
                        <path d="M1 15 l3 -2 3 2 3 -2 3 2 3 -2 3 2" stroke="#8a1a9a" />
                        <path d="M7 9H13L10 12Z" fill="#111" />
                      </Icon>
                    </SmallBtn>
                    <SmallBtn>
                      <Icon w={16} h={21}>
                        <path d="M8 1L14 8H10V10H6V8H2Z" fill="#8a1a9a" />
                        <path d="M8 20L14 13H10V11H6V13H2Z" fill="#1838d0" />
                      </Icon>
                    </SmallBtn>
                    <SmallBtn>
                      <Icon w={18} h={14}>
                        <path d="M0 2H18M0 12H18" stroke="#111" />
                        <path d="M0 7H18" stroke="#111" strokeDasharray="2 1" />
                      </Icon>
                    </SmallBtn>
                    <SmallBtn $plain>
                      <Icon w={18} h={14}>
                        <text x={9} y={11} textAnchor="middle" fontSize={12} fontFamily="Liberation Serif, serif" fontStyle="italic" fontWeight={700} fill="#111">fx</text>
                      </Icon>
                    </SmallBtn>
                  </SmallIcons>
                </SourceCol>
                <Knob
                  w={90}
                  h={70}
                  cx={42}
                  cy={44}
                  value="3В"
                  longAngles={[-130, -85, -50, 45, 85, 130]}
                  labels={[["0.1В", 11, 62], ["1В", 12, 34], ["10В", 24, 18], ["100В", 59, 14], ["200В", 76, 32], ["500В", 72, 62]]}
                />
              </SourceGroup>
              <Group $w={104} $ml={4}>
                <Legend $c="#14146e">Частота</Legend>
                <Knob
                  w={102}
                  h={70}
                  cx={49}
                  cy={45}
                  value="50K"
                  longAngles={[-130, -45, 0, 45, 80, 130]}
                  labels={[["1K", 23, 62], ["100K", 22, 23], ["250K", 57, 12], ["333K", 78, 22], ["500K", 86, 34], ["1M", 76, 62]]}
                />
              </Group>
              <Group $w={125} $ml={6}>
                <Legend $c="#7a7a7a">Синхронизация</Legend>
                <SyncGrid>
                  <SyncRow>
                    <SyncSlot $w={24}>
                      <Icon w={18} h={18}>
                        <path d="M2 16C8 16 8 2 15 2" stroke="#d02040" />
                        <path d="M0 5L5 8L0 11Z" fill="#1818c8" />
                        <path d="M5 8H18" stroke="#1818c8" strokeDasharray="1 1" />
                      </Icon>
                    </SyncSlot>
                    <SyncSlot $w={24} $ml={5}>
                      <Icon w={18} h={18}>
                        <path d="M0 16H6V3H18" stroke="#a8a8a8" />
                        <path d="M11 4V14M11 4L8 8H14Z" stroke="#a8a8a8" fill="#a8a8a8" />
                      </Icon>
                    </SyncSlot>
                    <SyncSlot $w={23} $ml={4} $pressed>
                      <Icon w={18} h={18}>
                        <path d="M0 2H7V16H18" stroke="#a8a8a8" />
                        <path d="M12 3V14M12 14L9 10H15Z" stroke="#a8a8a8" fill="#a8a8a8" />
                      </Icon>
                    </SyncSlot>
                    <SyncSlot $w={24} $ml={3}>
                      <Icon w={20} h={20}>
                        <path d="M2 16C8 16 8 2 15 2" stroke="#d02040" />
                        <path d="M0 5L5 8L0 11Z" fill="#1818c8" />
                        <path d="M5 8H18" stroke="#1818c8" strokeDasharray="1 1" />
                        <path d="M10 9L10 18L13 15L18 16Z" fill="#f4dc30" stroke="#222" strokeWidth={0.7} />
                      </Icon>
                    </SyncSlot>
                  </SyncRow>
                  <SyncRow>
                    <SyncSelect>2<Tri $dir="down" $c="#999" /></SyncSelect>
                    <SyncSlot $w={22} $ml={13}>
                      <Icon w={20} h={18}>
                        <path d="M8 1H18L13 5ZM8 17H18L13 13Z" fill="#a8a8a8" />
                        <path d="M0 6H16M2 9H18M0 12H16" stroke="#a8a8a8" strokeDasharray="2 1" />
                      </Icon>
                    </SyncSlot>
                    <SyncSlot $w={20} $ml={4}>
                      <Icon w={20} h={10}>
                        <path d="M0 5H7M13 5H20" stroke="#a8a8a8" />
                        <path d="M3 0L9 5L3 10ZM17 0L11 5L17 10Z" fill="#a8a8a8" />
                      </Icon>
                    </SyncSlot>
                  </SyncRow>
                </SyncGrid>
              </Group>
              <Group $w={132} $ml={6}>
                <Legend $c="#a8bcd4">Управление</Legend>
                <ControlGrid>
                  <CtlBtn $border="#b8b8b8">
                    <Icon w={14} h={16}>
                      <rect x={1} y={1} width={5} height={14} rx={1} fill="#9a9a9a" stroke="#777" />
                      <rect x={8} y={1} width={5} height={14} rx={1} fill="#9a9a9a" stroke="#777" />
                    </Icon>
                  </CtlBtn>
                  <CtlBtn $border="#23435a">
                    <Icon w={32} h={22}>
                      <path d="M2 11C6 -1 10 1 16 11S26 23 30 11" stroke="#d02030" strokeWidth={1.2} />
                    </Icon>
                  </CtlBtn>
                  <CtlBtn $border="#c81828">
                    <Icon w={36} h={22}>
                      <path d="M1 5l3 3 3-4 3 4 3-4 3 4 3-4 3 4 3-4 3 4 3-4 3 3" stroke="#a01818" />
                      <path d="M1 16l3 2 3-4 3 4 3-4 3 4 3-4 3 4 3-4 3 4 3-3 3 2" stroke="#1838b0" />
                    </Icon>
                  </CtlBtn>
                  <StartBtn $border="#23435a">
                    <Icon w={12} h={20}><path d="M1 1L11 10L1 19Z" fill="#20c020" stroke="#189018" /></Icon>
                    Пуск
                  </StartBtn>
                  <Counter>21.71</Counter>
                </ControlGrid>
              </Group>
            </GroupsRow>
          </Panel>
        </Workspace>
        <StatusBar>
          <StatusCell $w={190} $ml={4}>USB Осциллограф не подключен</StatusCell>
          <StatusCell $grow $ml={3} />
          <StatusCell $w={47} $ml={3}>1.7.2</StatusCell>
        </StatusBar>
      </AppWindow>
    </Page>
  );
}
